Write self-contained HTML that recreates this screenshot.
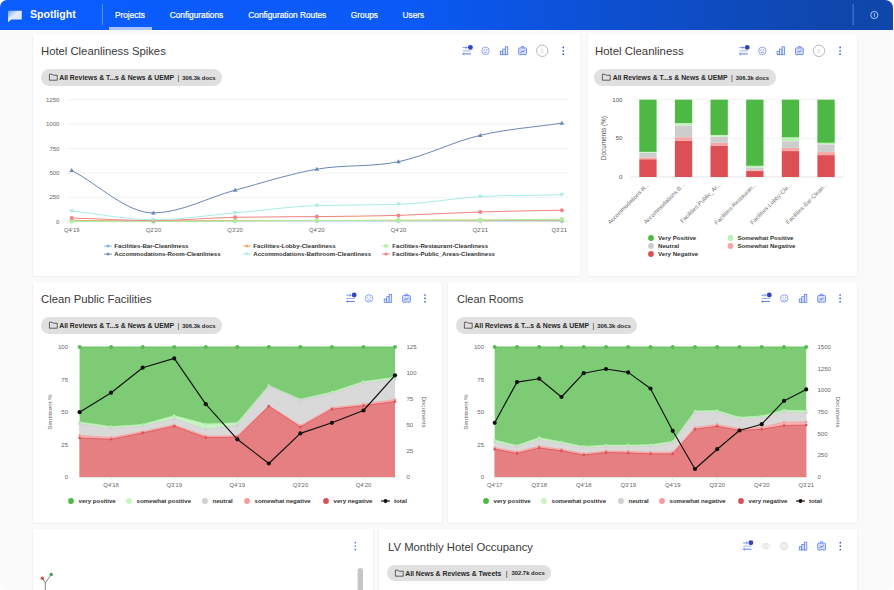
<!DOCTYPE html>
<html lang="en"><head><meta charset="utf-8"><title>Spotlight</title>
<style>
*{box-sizing:border-box;margin:0;padding:0}
html,body{width:894px;height:590px;overflow:hidden;background:#fff;font-family:"Liberation Sans",sans-serif;}
#app{position:absolute;left:0;top:0;width:892.8px;height:590px;background:#fafafa;border-radius:7px 8px 8px 8px;overflow:hidden}
#nav{position:absolute;left:0;top:0;width:894px;height:30px;background:linear-gradient(90deg,#0b5dff 0%,#0a5af6 45%,#0d50d2 68%,#0f47ae 92%,#0f46aa 100%)}
.nv{position:absolute;top:9.5px;color:#fff;font-size:8.3px;line-height:11px;white-space:nowrap;font-weight:400;-webkit-text-stroke:.22px #fff}
.card{position:absolute;background:#fff;box-shadow:0 1.2px 1.6px rgba(0,0,0,.085),0 0 1px rgba(0,0,0,.05)}
.title{position:absolute;color:#393939;font-size:11.4px;line-height:14px;white-space:nowrap;transform-origin:0 50%}
.pill{position:absolute;height:16.6px;border-radius:8.3px;background:#e0e0e0;color:#262626;font-weight:700;font-size:6.85px;line-height:17.8px;white-space:nowrap}
.pill span{position:absolute;top:.3px}
.pill .d{font-size:5.9px;top:.5px}
svg{position:absolute;left:0;top:0;overflow:visible}
text{font-family:"Liberation Sans",sans-serif}
</style></head><body><div id="app">

<div id="nav">
<svg width="894" height="30" viewBox="0 0 894 30">
<defs><linearGradient id="lg" x1="0" y1="0" x2="1" y2="1"><stop offset="0" stop-color="#6f9bff"/><stop offset=".42" stop-color="#eef3ff"/><stop offset="1" stop-color="#dbe6ff"/></linearGradient></defs>
<path d="M7.9,10.7 H21.8 V19.4 H11.3 L8.1,22.3 Z" fill="url(#lg)" opacity=".95"/>
<rect x="101.9" y="4" width="1" height="21" fill="#6f9dff" opacity=".8"/>
<rect x="109" y="27" width="43" height="3" fill="#a9c6ff"/>
<rect x="852.6" y="4" width="1.1" height="21" fill="#4f80e4" opacity=".95"/>
<circle cx="874.3" cy="15" r="3.6" fill="none" stroke="#bcd4ff" stroke-width=".9"/>
<rect x="873.9" y="13.2" width=".9" height="3.6" fill="#bcd4ff"/>
</svg>
<div style="position:absolute;left:29.5px;top:7px;color:#fff;font-size:11.2px;line-height:15px;font-weight:700;white-space:nowrap;transform-origin:0 50%;transform:scaleX(.943)" id="logo">Spotlight</div>
<div class="nv" style="left:114.9px">Projects</div>
<div class="nv" style="left:169.7px">Configurations</div>
<div class="nv" style="left:248.3px">Configuration Routes</div>
<div class="nv" style="left:350.8px">Groups</div>
<div class="nv" style="left:402.6px">Users</div>
</div>
<div class="card" style="left:33px;top:33.5px;width:547.2px;height:242px"></div>
<div class="card" style="left:587.6px;top:33.5px;width:269.8px;height:242px"></div>
<div class="card" style="left:33px;top:282.3px;width:409px;height:240.3px"></div>
<div class="card" style="left:448px;top:282.3px;width:409.4px;height:240.3px"></div>
<div class="card" style="left:33px;top:528.8px;width:340.3px;height:70px"></div>
<div class="card" style="left:379.2px;top:529.4px;width:478.2px;height:70px"></div>
<div class="title" style="left:41.3px;top:44.1px;transform:scaleX(0.9904)">Hotel Cleanliness Spikes</div>
<div class="title" style="left:595.0px;top:44.1px;transform:scaleX(0.9995)">Hotel Cleanliness</div>
<div class="title" style="left:41.3px;top:291.7px;transform:scaleX(0.9926)">Clean Public Facilities</div>
<div class="title" style="left:456.6px;top:291.7px;transform:scaleX(0.9635)">Clean Rooms</div>
<div class="title" style="left:387.5px;top:539.5px;transform:scaleX(0.9928)">LV Monthly Hotel Occupancy</div>
<div class="pill" style="left:40.8px;top:69.0px;width:181.6px"><svg width="20" height="17"><path d="M8.4,5.2 h2.6 l.9,1 h4.3 v5 h-7.8 z" fill="none" stroke="#333" stroke-width=".75"/></svg><span style="left:18.4px">All Reviews &amp; T...s &amp; News &amp; UEMP</span><span style="left:136.6px;font-weight:400">|</span><span class="d" style="left:141.4px">306.3k docs</span></div>
<div class="pill" style="left:594.3px;top:69.0px;width:181.6px"><svg width="20" height="17"><path d="M8.4,5.2 h2.6 l.9,1 h4.3 v5 h-7.8 z" fill="none" stroke="#333" stroke-width=".75"/></svg><span style="left:18.4px">All Reviews &amp; T...s &amp; News &amp; UEMP</span><span style="left:136.6px;font-weight:400">|</span><span class="d" style="left:141.4px">306.3k docs</span></div>
<div class="pill" style="left:40.8px;top:317.2px;width:181.6px"><svg width="20" height="17"><path d="M8.4,5.2 h2.6 l.9,1 h4.3 v5 h-7.8 z" fill="none" stroke="#333" stroke-width=".75"/></svg><span style="left:18.4px">All Reviews &amp; T...s &amp; News &amp; UEMP</span><span style="left:136.6px;font-weight:400">|</span><span class="d" style="left:141.4px">306.3k docs</span></div>
<div class="pill" style="left:455.9px;top:317.2px;width:181.6px"><svg width="20" height="17"><path d="M8.4,5.2 h2.6 l.9,1 h4.3 v5 h-7.8 z" fill="none" stroke="#333" stroke-width=".75"/></svg><span style="left:18.4px">All Reviews &amp; T...s &amp; News &amp; UEMP</span><span style="left:136.6px;font-weight:400">|</span><span class="d" style="left:141.4px">306.3k docs</span></div>
<div class="pill" style="left:386.8px;top:564.6px;width:164.4px"><svg width="20" height="17"><path d="M8.4,5.2 h2.6 l.9,1 h4.3 v5 h-7.8 z" fill="none" stroke="#333" stroke-width=".75"/></svg><span style="left:18.4px">All News &amp; Reviews &amp; Tweets</span><span style="left:119.0px;font-weight:400">|</span><span class="d" style="left:124.6px">302.7k docs</span></div>
<svg width="894" height="590" viewBox="0 0 894 590">
<g fill="none"><path d="M462.6,47.6 h5" stroke="#5a79e6" stroke-width=".8"/><path d="M465.6,46.4 l1.3,1.2 l-1.3,1.2" stroke="#5a79e6" stroke-width=".7"/><path d="M462.6,50.9 h8.4" stroke="#8aa4f2" stroke-width=".8"/><path d="M462.6,53.9 h8.4" stroke="#6685ea" stroke-width="1.1"/><path d="M464.2,52.7 l-1.3,1.2 l1.3,1.2" stroke="#5a79e6" stroke-width=".7"/></g><circle cx="470.4" cy="47.4" r="2.45" fill="#3346c0"/><g stroke="#6f8ff0" stroke-width=".75" fill="none"><circle cx="485.5" cy="50.8" r="3.75" fill="#f4f7ff"/><path d="M484.1,52.7 q1.4,-.9 2.8,0"/></g><circle cx="484.2" cy="49.9" r=".55" fill="#6f8ff0"/><circle cx="486.8" cy="49.9" r=".55" fill="#6f8ff0"/><g stroke="#5578e8" stroke-width=".75" fill="#e3ebff"><rect x="500.3" y="51.4" width="2.5" height="3.3"/><rect x="502.8" y="49.1" width="2.5" height="5.6"/><rect x="505.3" y="46.8" width="2.5" height="7.9"/></g><g stroke="#5578e8" stroke-width=".75" fill="#d3defd"><rect x="518.7" y="47.9" width="7.8" height="6.6" rx=".8"/><path d="M521.4,47.9 v-1.4 h2.4 v1.4" fill="none"/><path d="M520.2,54.5 v.9 M525.0,54.5 v.9" fill="none"/><path d="M520.3,52.7 l1.5,-1.5 l1.1,.7 l1.9,-1.9" fill="none" stroke="#2f46b8" stroke-width=".7"/></g><circle cx="542.2" cy="50.8" r="5.7" fill="#fff" stroke="#a3a3a3" stroke-width=".75"/><path d="M542.2,51.1 a1,1 0 1 1 .01,0 M540.6,52.8 q1.6,-1.6 3.2,0" fill="none" stroke="#d2d2d2" stroke-width=".6"/><circle cx="563.3" cy="47.4" r=".85" fill="#3a57c4"/><circle cx="563.3" cy="50.8" r=".85" fill="#3a57c4"/><circle cx="563.3" cy="54.2" r=".85" fill="#3a57c4"/>
<g fill="none"><path d="M739.4,47.6 h5" stroke="#5a79e6" stroke-width=".8"/><path d="M742.4,46.4 l1.3,1.2 l-1.3,1.2" stroke="#5a79e6" stroke-width=".7"/><path d="M739.4,50.9 h8.4" stroke="#8aa4f2" stroke-width=".8"/><path d="M739.4,53.9 h8.4" stroke="#6685ea" stroke-width="1.1"/><path d="M741.0,52.7 l-1.3,1.2 l1.3,1.2" stroke="#5a79e6" stroke-width=".7"/></g><circle cx="747.2" cy="47.4" r="2.45" fill="#3346c0"/><g stroke="#6f8ff0" stroke-width=".75" fill="none"><circle cx="762.3" cy="50.8" r="3.75" fill="#f4f7ff"/><path d="M760.9,52.7 q1.4,-.9 2.8,0"/></g><circle cx="761.0" cy="49.9" r=".55" fill="#6f8ff0"/><circle cx="763.6" cy="49.9" r=".55" fill="#6f8ff0"/><g stroke="#5578e8" stroke-width=".75" fill="#e3ebff"><rect x="777.1" y="51.4" width="2.5" height="3.3"/><rect x="779.6" y="49.1" width="2.5" height="5.6"/><rect x="782.1" y="46.8" width="2.5" height="7.9"/></g><g stroke="#5578e8" stroke-width=".75" fill="#d3defd"><rect x="795.5" y="47.9" width="7.8" height="6.6" rx=".8"/><path d="M798.2,47.9 v-1.4 h2.4 v1.4" fill="none"/><path d="M797.0,54.5 v.9 M801.8,54.5 v.9" fill="none"/><path d="M797.1,52.7 l1.5,-1.5 l1.1,.7 l1.9,-1.9" fill="none" stroke="#2f46b8" stroke-width=".7"/></g><circle cx="819.0" cy="50.8" r="5.7" fill="#fff" stroke="#a3a3a3" stroke-width=".75"/><path d="M819.0,51.1 a1,1 0 1 1 .01,0 M817.4,52.8 q1.6,-1.6 3.2,0" fill="none" stroke="#d2d2d2" stroke-width=".6"/><circle cx="840.1" cy="47.4" r=".85" fill="#3a57c4"/><circle cx="840.1" cy="50.8" r=".85" fill="#3a57c4"/><circle cx="840.1" cy="54.2" r=".85" fill="#3a57c4"/>
<g fill="none"><path d="M346.4,295.2 h5" stroke="#5a79e6" stroke-width=".8"/><path d="M349.4,294.0 l1.3,1.2 l-1.3,1.2" stroke="#5a79e6" stroke-width=".7"/><path d="M346.4,298.5 h8.4" stroke="#8aa4f2" stroke-width=".8"/><path d="M346.4,301.5 h8.4" stroke="#6685ea" stroke-width="1.1"/><path d="M348.0,300.3 l-1.3,1.2 l1.3,1.2" stroke="#5a79e6" stroke-width=".7"/></g><circle cx="354.2" cy="295.0" r="2.45" fill="#3346c0"/><g stroke="#6f8ff0" stroke-width=".75" fill="none"><circle cx="369.1" cy="298.4" r="3.75" fill="#f4f7ff"/><path d="M367.7,300.3 q1.4,-.9 2.8,0"/></g><circle cx="367.8" cy="297.5" r=".55" fill="#6f8ff0"/><circle cx="370.4" cy="297.5" r=".55" fill="#6f8ff0"/><g stroke="#5578e8" stroke-width=".75" fill="#e3ebff"><rect x="384.2" y="299.0" width="2.5" height="3.3"/><rect x="386.7" y="296.7" width="2.5" height="5.6"/><rect x="389.2" y="294.4" width="2.5" height="7.9"/></g><g stroke="#5578e8" stroke-width=".75" fill="#d3defd"><rect x="402.6" y="295.5" width="7.8" height="6.6" rx=".8"/><path d="M405.3,295.5 v-1.4 h2.4 v1.4" fill="none"/><path d="M404.1,302.1 v.9 M408.9,302.1 v.9" fill="none"/><path d="M404.2,300.3 l1.5,-1.5 l1.1,.7 l1.9,-1.9" fill="none" stroke="#2f46b8" stroke-width=".7"/></g><circle cx="425.0" cy="295.0" r=".85" fill="#3a57c4"/><circle cx="425.0" cy="298.4" r=".85" fill="#3a57c4"/><circle cx="425.0" cy="301.8" r=".85" fill="#3a57c4"/>
<g fill="none"><path d="M761.5,295.2 h5" stroke="#5a79e6" stroke-width=".8"/><path d="M764.5,294.0 l1.3,1.2 l-1.3,1.2" stroke="#5a79e6" stroke-width=".7"/><path d="M761.5,298.5 h8.4" stroke="#8aa4f2" stroke-width=".8"/><path d="M761.5,301.5 h8.4" stroke="#6685ea" stroke-width="1.1"/><path d="M763.1,300.3 l-1.3,1.2 l1.3,1.2" stroke="#5a79e6" stroke-width=".7"/></g><circle cx="769.3" cy="295.0" r="2.45" fill="#3346c0"/><g stroke="#6f8ff0" stroke-width=".75" fill="none"><circle cx="784.2" cy="298.4" r="3.75" fill="#f4f7ff"/><path d="M782.8,300.3 q1.4,-.9 2.8,0"/></g><circle cx="782.9" cy="297.5" r=".55" fill="#6f8ff0"/><circle cx="785.5" cy="297.5" r=".55" fill="#6f8ff0"/><g stroke="#5578e8" stroke-width=".75" fill="#e3ebff"><rect x="799.3" y="299.0" width="2.5" height="3.3"/><rect x="801.8" y="296.7" width="2.5" height="5.6"/><rect x="804.3" y="294.4" width="2.5" height="7.9"/></g><g stroke="#5578e8" stroke-width=".75" fill="#d3defd"><rect x="817.7" y="295.5" width="7.8" height="6.6" rx=".8"/><path d="M820.4,295.5 v-1.4 h2.4 v1.4" fill="none"/><path d="M819.2,302.1 v.9 M824.0,302.1 v.9" fill="none"/><path d="M819.3,300.3 l1.5,-1.5 l1.1,.7 l1.9,-1.9" fill="none" stroke="#2f46b8" stroke-width=".7"/></g><circle cx="840.1" cy="295.0" r=".85" fill="#3a57c4"/><circle cx="840.1" cy="298.4" r=".85" fill="#3a57c4"/><circle cx="840.1" cy="301.8" r=".85" fill="#3a57c4"/>
<circle cx="355.3" cy="542.6" r=".85" fill="#4a7fe8"/><circle cx="355.3" cy="546.0" r=".85" fill="#4a7fe8"/><circle cx="355.3" cy="549.4" r=".85" fill="#4a7fe8"/>
<g fill="none"><path d="M743.1,542.9 h5" stroke="#5a79e6" stroke-width=".8"/><path d="M746.1,541.7 l1.3,1.2 l-1.3,1.2" stroke="#5a79e6" stroke-width=".7"/><path d="M743.1,546.2 h8.4" stroke="#8aa4f2" stroke-width=".8"/><path d="M743.1,549.2 h8.4" stroke="#6685ea" stroke-width="1.1"/><path d="M744.7,548.0 l-1.3,1.2 l1.3,1.2" stroke="#5a79e6" stroke-width=".7"/></g><circle cx="750.9" cy="542.7" r="2.45" fill="#3346c0"/><g stroke="#d6d6d6" stroke-width=".8" fill="none"><path d="M761.4,546.1 q4.5,-5.2 9,0 q-4.5,5.2 -9,0z"/><circle cx="765.9" cy="546.1" r="1.5"/></g><g stroke="#d4d4d4" stroke-width=".75" fill="none"><circle cx="784.0" cy="546.1" r="3.75" fill="#f6f6f6"/><path d="M782.5,547.6 h3"/></g><circle cx="782.7" cy="545.2" r=".55" fill="#d4d4d4"/><circle cx="785.3" cy="545.2" r=".55" fill="#d4d4d4"/><g stroke="#5578e8" stroke-width=".75" fill="#e3ebff"><rect x="799.3" y="546.7" width="2.5" height="3.3"/><rect x="801.8" y="544.4" width="2.5" height="5.6"/><rect x="804.3" y="542.1" width="2.5" height="7.9"/></g><g stroke="#5578e8" stroke-width=".75" fill="#d3defd"><rect x="817.7" y="543.2" width="7.8" height="6.6" rx=".8"/><path d="M820.4,543.2 v-1.4 h2.4 v1.4" fill="none"/><path d="M819.2,549.8 v.9 M824.0,549.8 v.9" fill="none"/><path d="M819.3,548.0 l1.5,-1.5 l1.1,.7 l1.9,-1.9" fill="none" stroke="#2f46b8" stroke-width=".7"/></g><circle cx="840.3" cy="542.7" r=".85" fill="#3a57c4"/><circle cx="840.3" cy="546.1" r=".85" fill="#3a57c4"/><circle cx="840.3" cy="549.5" r=".85" fill="#3a57c4"/>
<rect x="67" y="221.3" width="501" height=".8" fill="#e4e4e4"/>
<text x="59.4" y="223.7" font-size="6" fill="#666" text-anchor="end">0</text>
<rect x="67" y="196.9" width="501" height=".8" fill="#efefef"/>
<text x="59.4" y="199.3" font-size="6" fill="#666" text-anchor="end">250</text>
<rect x="67" y="172.5" width="501" height=".8" fill="#efefef"/>
<text x="59.4" y="174.9" font-size="6" fill="#666" text-anchor="end">500</text>
<rect x="67" y="148.1" width="501" height=".8" fill="#efefef"/>
<text x="59.4" y="150.5" font-size="6" fill="#666" text-anchor="end">750</text>
<rect x="67" y="123.7" width="501" height=".8" fill="#efefef"/>
<text x="59.4" y="126.1" font-size="6" fill="#666" text-anchor="end">1000</text>
<rect x="67" y="99.3" width="501" height=".8" fill="#efefef"/>
<text x="59.4" y="101.7" font-size="6" fill="#666" text-anchor="end">1250</text>
<rect x="71.4" y="222.2" width=".6" height="2.6" fill="#e0e0e0"/>
<text x="71.7" y="232.2" font-size="5.9" fill="#666" text-anchor="middle">Q4'19</text>
<rect x="153.1" y="222.2" width=".6" height="2.6" fill="#e0e0e0"/>
<text x="153.4" y="232.2" font-size="5.9" fill="#666" text-anchor="middle">Q2'20</text>
<rect x="234.8" y="222.2" width=".6" height="2.6" fill="#e0e0e0"/>
<text x="235.1" y="232.2" font-size="5.9" fill="#666" text-anchor="middle">Q3'20</text>
<rect x="316.5" y="222.2" width=".6" height="2.6" fill="#e0e0e0"/>
<text x="316.8" y="232.2" font-size="5.9" fill="#666" text-anchor="middle">Q4'20</text>
<rect x="398.2" y="222.2" width=".6" height="2.6" fill="#e0e0e0"/>
<text x="398.5" y="232.2" font-size="5.9" fill="#666" text-anchor="middle">Q4'20</text>
<rect x="479.9" y="222.2" width=".6" height="2.6" fill="#e0e0e0"/>
<text x="480.2" y="232.2" font-size="5.9" fill="#666" text-anchor="middle">Q2'21</text>
<rect x="561.6" y="222.2" width=".6" height="2.6" fill="#e0e0e0"/>
<text x="559.3" y="232.2" font-size="5.9" fill="#666" text-anchor="middle">Q3'21</text>
<path d="M71.70,220.92 C98.93,221.05 126.17,221.31 153.40,221.31 C180.63,221.31 207.87,220.72 235.10,220.72 C262.33,220.72 289.57,220.72 316.80,220.72 C344.03,220.72 371.27,220.72 398.50,220.72 C425.73,220.72 452.97,220.72 480.20,220.72 C507.43,220.72 534.67,220.72 561.90,220.72" fill="none" stroke="#7cb5ec" stroke-width="1"/>
<circle cx="71.7" cy="220.9" r="2" fill="#7cb5ec"/>
<circle cx="153.4" cy="221.3" r="2" fill="#7cb5ec"/>
<circle cx="235.1" cy="220.7" r="2" fill="#7cb5ec"/>
<circle cx="316.8" cy="220.7" r="2" fill="#7cb5ec"/>
<circle cx="398.5" cy="220.7" r="2" fill="#7cb5ec"/>
<circle cx="480.2" cy="220.7" r="2" fill="#7cb5ec"/>
<circle cx="561.9" cy="220.7" r="2" fill="#7cb5ec"/>
<path d="M71.70,220.33 C98.93,220.59 126.17,221.11 153.40,221.11 C180.63,221.11 207.87,220.53 235.10,220.53 C262.33,220.53 289.57,220.53 316.80,220.53 C344.03,220.53 371.27,220.40 398.50,220.33 C425.73,220.27 452.97,220.20 480.20,220.14 C507.43,220.07 534.67,220.01 561.90,219.94" fill="none" stroke="#f7a35c" stroke-width="1"/>
<path d="M71.7,218.0 l2.3,2.3 l-2.3,2.3 l-2.3,-2.3z" fill="#f7a35c"/>
<path d="M153.4,218.8 l2.3,2.3 l-2.3,2.3 l-2.3,-2.3z" fill="#f7a35c"/>
<path d="M235.1,218.2 l2.3,2.3 l-2.3,2.3 l-2.3,-2.3z" fill="#f7a35c"/>
<path d="M316.8,218.2 l2.3,2.3 l-2.3,2.3 l-2.3,-2.3z" fill="#f7a35c"/>
<path d="M398.5,218.0 l2.3,2.3 l-2.3,2.3 l-2.3,-2.3z" fill="#f7a35c"/>
<path d="M480.2,217.8 l2.3,2.3 l-2.3,2.3 l-2.3,-2.3z" fill="#f7a35c"/>
<path d="M561.9,217.6 l2.3,2.3 l-2.3,2.3 l-2.3,-2.3z" fill="#f7a35c"/>
<path d="M71.70,221.21 C98.93,221.28 126.17,221.41 153.40,221.41 C180.63,221.41 207.87,221.07 235.10,220.92 C262.33,220.77 289.57,220.63 316.80,220.53 C344.03,220.43 371.27,220.43 398.50,220.33 C425.73,220.24 452.97,220.12 480.20,219.94 C507.43,219.76 534.67,219.49 561.90,219.26" fill="none" stroke="#adf19f" stroke-width="1"/>
<rect x="69.7" y="219.2" width="4" height="4" fill="#adf19f"/>
<rect x="151.4" y="219.4" width="4" height="4" fill="#adf19f"/>
<rect x="233.1" y="218.9" width="4" height="4" fill="#adf19f"/>
<rect x="314.8" y="218.5" width="4" height="4" fill="#adf19f"/>
<rect x="396.5" y="218.3" width="4" height="4" fill="#adf19f"/>
<rect x="478.2" y="217.9" width="4" height="4" fill="#adf19f"/>
<rect x="559.9" y="217.3" width="4" height="4" fill="#adf19f"/>
<path d="M71.70,217.99 C98.93,218.84 126.17,220.53 153.40,220.53 C180.63,220.53 207.87,217.92 235.10,217.31 C262.33,216.70 289.57,216.93 316.80,216.62 C344.03,216.32 371.27,216.14 398.50,215.36 C425.73,214.58 452.97,212.80 480.20,211.94 C507.43,211.08 534.67,210.77 561.90,210.18" fill="none" stroke="#f28383" stroke-width="1"/>
<circle cx="71.7" cy="218.0" r="2" fill="#f28383"/>
<circle cx="153.4" cy="220.5" r="2" fill="#f28383"/>
<circle cx="235.1" cy="217.3" r="2" fill="#f28383"/>
<circle cx="316.8" cy="216.6" r="2" fill="#f28383"/>
<circle cx="398.5" cy="215.4" r="2" fill="#f28383"/>
<circle cx="480.2" cy="211.9" r="2" fill="#f28383"/>
<circle cx="561.9" cy="210.2" r="2" fill="#f28383"/>
<path d="M71.70,210.96 C98.93,213.89 126.17,219.75 153.40,219.75 C180.63,219.75 207.87,215.27 235.10,212.92 C262.33,210.56 289.57,206.40 316.80,205.60 C344.03,204.79 371.27,205.28 398.50,204.42 C425.73,203.57 452.97,198.21 480.20,196.62 C507.43,195.02 534.67,195.45 561.90,194.86" fill="none" stroke="#a6ece7" stroke-width="1"/>
<path d="M71.7,213.2 l2.3,-4 h-4.6z" fill="#a6ece7"/>
<path d="M153.4,221.9 l2.3,-4 h-4.6z" fill="#a6ece7"/>
<path d="M235.1,215.1 l2.3,-4 h-4.6z" fill="#a6ece7"/>
<path d="M316.8,207.8 l2.3,-4 h-4.6z" fill="#a6ece7"/>
<path d="M398.5,206.6 l2.3,-4 h-4.6z" fill="#a6ece7"/>
<path d="M480.2,198.8 l2.3,-4 h-4.6z" fill="#a6ece7"/>
<path d="M561.9,197.1 l2.3,-4 h-4.6z" fill="#a6ece7"/>
<path d="M71.70,170.46 C98.93,184.61 126.17,212.92 153.40,212.92 C180.63,212.92 207.87,197.46 235.10,190.18 C262.33,182.89 289.57,173.94 316.80,169.19 C344.03,164.44 371.27,167.32 398.50,161.68 C425.73,156.03 452.97,141.75 480.20,135.32 C507.43,128.90 534.67,127.19 561.90,123.12" fill="none" stroke="#6a86b8" stroke-width="1"/>
<path d="M71.7,168.1 l2.3,4 h-4.6z" fill="#6a86b8"/>
<path d="M153.4,210.5 l2.3,4 h-4.6z" fill="#6a86b8"/>
<path d="M235.1,187.8 l2.3,4 h-4.6z" fill="#6a86b8"/>
<path d="M316.8,166.8 l2.3,4 h-4.6z" fill="#6a86b8"/>
<path d="M398.5,159.3 l2.3,4 h-4.6z" fill="#6a86b8"/>
<path d="M480.2,132.9 l2.3,4 h-4.6z" fill="#6a86b8"/>
<path d="M561.9,120.7 l2.3,4 h-4.6z" fill="#6a86b8"/>
<rect x="104.0" y="245.6" width="8" height=".9" fill="#7cb5ec"/>
<circle cx="108.0" cy="246.0" r="1.6" fill="#7cb5ec"/>
<text x="114.3" y="248.1" font-size="6.1" font-weight="700" fill="#333">Facilities-Bar-Cleanliness</text>
<rect x="104.0" y="253.6" width="8" height=".9" fill="#6a86b8"/>
<path d="M108.0,252.1 l1.8,3.2 h-3.6z" fill="#6a86b8"/>
<text x="114.3" y="256.1" font-size="6.1" font-weight="700" fill="#333">Accommodations-Room-Cleanliness</text>
<rect x="243.0" y="245.6" width="8" height=".9" fill="#f7a35c"/>
<path d="M247.0,244.2 l1.8,1.8 l-1.8,1.8 l-1.8,-1.8z" fill="#f7a35c"/>
<text x="253.3" y="248.1" font-size="6.1" font-weight="700" fill="#333">Facilities-Lobby-Cleanliness</text>
<rect x="243.0" y="253.6" width="8" height=".9" fill="#a6ece7"/>
<path d="M247.0,255.8 l1.8,-3.2 h-3.6z" fill="#a6ece7"/>
<text x="253.3" y="256.1" font-size="6.1" font-weight="700" fill="#333">Accommodations-Bathroom-Cleanliness</text>
<rect x="382.0" y="245.6" width="8" height=".9" fill="#adf19f"/>
<rect x="384.4" y="244.4" width="3.2" height="3.2" fill="#adf19f"/>
<text x="392.3" y="248.1" font-size="6.1" font-weight="700" fill="#333">Facilities-Restaurant-Cleanliness</text>
<rect x="382.0" y="253.6" width="8" height=".9" fill="#f28383"/>
<circle cx="386.0" cy="254.0" r="1.6" fill="#f28383"/>
<text x="392.3" y="256.1" font-size="6.1" font-weight="700" fill="#333">Facilities-Public_Areas-Cleanliness</text>
<rect x="631" y="176.6" width="213" height=".8" fill="#dcdcdc"/>
<text x="622.5" y="179.0" font-size="6.1" fill="#555" text-anchor="end">0</text>
<rect x="631" y="137.9" width="213" height=".8" fill="#efefef"/>
<text x="622.5" y="140.3" font-size="6.1" fill="#555" text-anchor="end">50</text>
<rect x="631" y="99.3" width="213" height=".8" fill="#efefef"/>
<text x="622.5" y="101.7" font-size="6.1" fill="#555" text-anchor="end">100</text>
<text transform="translate(606.3,138.2) rotate(-90)" font-size="6.4" fill="#555" text-anchor="middle">Documents (%)</text>
<rect x="639.3" y="159.07" width="17.3" height="17.93" fill="#db4f55"/>
<rect x="639.3" y="158.85" width="17.3" height=".45" fill="#fff" opacity=".8"/>
<rect x="639.3" y="157.37" width="17.3" height="1.70" fill="#f6a5a5"/>
<rect x="639.3" y="157.15" width="17.3" height=".45" fill="#fff" opacity=".8"/>
<rect x="639.3" y="152.65" width="17.3" height="4.72" fill="#cdcdcd"/>
<rect x="639.3" y="152.43" width="17.3" height=".45" fill="#fff" opacity=".8"/>
<rect x="639.3" y="151.88" width="17.3" height="0.77" fill="#b9f3b3"/>
<rect x="639.3" y="151.66" width="17.3" height=".45" fill="#fff" opacity=".8"/>
<rect x="639.3" y="99.70" width="17.3" height="52.18" fill="#4db843"/>
<text transform="translate(649.7,185.0) rotate(-45)" font-size="5.85" fill="#777" text-anchor="end">Accommodations-R...</text>
<rect x="674.9" y="140.36" width="17.3" height="36.64" fill="#db4f55"/>
<rect x="674.9" y="140.14" width="17.3" height=".45" fill="#fff" opacity=".8"/>
<rect x="674.9" y="137.04" width="17.3" height="3.32" fill="#f6a5a5"/>
<rect x="674.9" y="136.82" width="17.3" height=".45" fill="#fff" opacity=".8"/>
<rect x="674.9" y="125.21" width="17.3" height="11.83" fill="#cdcdcd"/>
<rect x="674.9" y="124.99" width="17.3" height=".45" fill="#fff" opacity=".8"/>
<rect x="674.9" y="123.12" width="17.3" height="2.09" fill="#b9f3b3"/>
<rect x="674.9" y="122.90" width="17.3" height=".45" fill="#fff" opacity=".8"/>
<rect x="674.9" y="99.70" width="17.3" height="23.42" fill="#4db843"/>
<text transform="translate(685.3,185.0) rotate(-45)" font-size="5.85" fill="#777" text-anchor="end">Accommodations-B...</text>
<rect x="710.5" y="145.31" width="17.3" height="31.69" fill="#db4f55"/>
<rect x="710.5" y="145.09" width="17.3" height=".45" fill="#fff" opacity=".8"/>
<rect x="710.5" y="142.76" width="17.3" height="2.55" fill="#f6a5a5"/>
<rect x="710.5" y="142.54" width="17.3" height=".45" fill="#fff" opacity=".8"/>
<rect x="710.5" y="136.34" width="17.3" height="6.42" fill="#cdcdcd"/>
<rect x="710.5" y="136.12" width="17.3" height=".45" fill="#fff" opacity=".8"/>
<rect x="710.5" y="134.95" width="17.3" height="1.39" fill="#b9f3b3"/>
<rect x="710.5" y="134.73" width="17.3" height=".45" fill="#fff" opacity=".8"/>
<rect x="710.5" y="99.70" width="17.3" height="35.25" fill="#4db843"/>
<text transform="translate(720.9,185.0) rotate(-45)" font-size="5.85" fill="#777" text-anchor="end">Facilities-Public_Ar...</text>
<rect x="746.2" y="170.89" width="17.3" height="6.11" fill="#db4f55"/>
<rect x="746.2" y="170.67" width="17.3" height=".45" fill="#fff" opacity=".8"/>
<rect x="746.2" y="169.89" width="17.3" height="1.00" fill="#f6a5a5"/>
<rect x="746.2" y="169.67" width="17.3" height=".45" fill="#fff" opacity=".8"/>
<rect x="746.2" y="167.18" width="17.3" height="2.71" fill="#cdcdcd"/>
<rect x="746.2" y="166.96" width="17.3" height=".45" fill="#fff" opacity=".8"/>
<rect x="746.2" y="165.79" width="17.3" height="1.39" fill="#b9f3b3"/>
<rect x="746.2" y="165.57" width="17.3" height=".45" fill="#fff" opacity=".8"/>
<rect x="746.2" y="99.70" width="17.3" height="66.09" fill="#4db843"/>
<text transform="translate(756.6,185.0) rotate(-45)" font-size="5.85" fill="#777" text-anchor="end">Facilities-Restauran...</text>
<rect x="781.8" y="150.87" width="17.3" height="26.13" fill="#db4f55"/>
<rect x="781.8" y="150.65" width="17.3" height=".45" fill="#fff" opacity=".8"/>
<rect x="781.8" y="147.86" width="17.3" height="3.01" fill="#f6a5a5"/>
<rect x="781.8" y="147.64" width="17.3" height=".45" fill="#fff" opacity=".8"/>
<rect x="781.8" y="141.06" width="17.3" height="6.80" fill="#cdcdcd"/>
<rect x="781.8" y="140.84" width="17.3" height=".45" fill="#fff" opacity=".8"/>
<rect x="781.8" y="137.35" width="17.3" height="3.71" fill="#b9f3b3"/>
<rect x="781.8" y="137.13" width="17.3" height=".45" fill="#fff" opacity=".8"/>
<rect x="781.8" y="99.70" width="17.3" height="37.65" fill="#4db843"/>
<text transform="translate(792.2,185.0) rotate(-45)" font-size="5.85" fill="#777" text-anchor="end">Facilities-Lobby-Cle...</text>
<rect x="817.4" y="154.97" width="17.3" height="22.03" fill="#db4f55"/>
<rect x="817.4" y="154.75" width="17.3" height=".45" fill="#fff" opacity=".8"/>
<rect x="817.4" y="151.88" width="17.3" height="3.09" fill="#f6a5a5"/>
<rect x="817.4" y="151.66" width="17.3" height=".45" fill="#fff" opacity=".8"/>
<rect x="817.4" y="144.15" width="17.3" height="7.73" fill="#cdcdcd"/>
<rect x="817.4" y="143.93" width="17.3" height=".45" fill="#fff" opacity=".8"/>
<rect x="817.4" y="142.76" width="17.3" height="1.39" fill="#b9f3b3"/>
<rect x="817.4" y="142.54" width="17.3" height=".45" fill="#fff" opacity=".8"/>
<rect x="817.4" y="99.70" width="17.3" height="43.06" fill="#4db843"/>
<text transform="translate(827.8,185.0) rotate(-45)" font-size="5.85" fill="#777" text-anchor="end">Facilities-Bar-Clean...</text>
<circle cx="651.0" cy="238.0" r="2.9" fill="#4db843"/>
<text x="658.0" y="240.2" font-size="6.15" font-weight="700" fill="#333">Very Positive</text>
<circle cx="651.0" cy="246.0" r="2.9" fill="#cdcdcd"/>
<text x="658.0" y="248.2" font-size="6.15" font-weight="700" fill="#333">Neutral</text>
<circle cx="651.0" cy="254.0" r="2.9" fill="#db4f55"/>
<text x="658.0" y="256.2" font-size="6.15" font-weight="700" fill="#333">Very Negative</text>
<circle cx="730.5" cy="238.0" r="2.9" fill="#b9f3b3"/>
<text x="737.5" y="240.2" font-size="6.15" font-weight="700" fill="#333">Somewhat Positive</text>
<circle cx="730.5" cy="246.0" r="2.9" fill="#f6a5a5"/>
<text x="737.5" y="248.2" font-size="6.15" font-weight="700" fill="#333">Somewhat Negative</text>
<rect x="79.60" y="347.00" width="315.40" height="130.00" fill="#7dcb74"/>
<polygon points="79.60,422.00 111.14,426.60 142.68,424.50 174.22,415.60 205.76,424.00 237.30,422.80 268.84,385.50 300.38,399.30 331.92,392.00 363.46,381.50 395.00,377.20 395.00,477.00 79.60,477.00" fill="#c6f5c1"/>
<polygon points="79.60,424.00 111.14,428.30 142.68,426.20 174.22,418.60 205.76,429.20 237.30,425.30 268.84,386.00 300.38,400.00 331.92,393.60 363.46,383.00 395.00,379.20 395.00,477.00 79.60,477.00" fill="#d9d9d9"/>
<polygon points="79.60,435.50 111.14,437.50 142.68,431.50 174.22,424.80 205.76,436.00 237.30,435.80 268.84,405.50 300.38,425.50 331.92,407.80 363.46,404.30 395.00,399.50 395.00,477.00 79.60,477.00" fill="#f7b3b3"/>
<polygon points="79.60,438.00 111.14,439.30 142.68,433.00 174.22,426.20 205.76,437.60 237.30,437.20 268.84,406.30 300.38,427.00 331.92,409.20 363.46,405.80 395.00,401.60 395.00,477.00 79.60,477.00" fill="#e57f82"/>
<polyline points="79.60,422.00 111.14,426.60 142.68,424.50 174.22,415.60 205.76,424.00 237.30,422.80 268.84,385.50 300.38,399.30 331.92,392.00 363.46,381.50 395.00,377.20" fill="none" stroke="#b4efae" stroke-width=".8"/>
<circle cx="79.6" cy="422.0" r="1.3" fill="#b4efae"/>
<circle cx="111.1" cy="426.6" r="1.3" fill="#b4efae"/>
<circle cx="142.7" cy="424.5" r="1.3" fill="#b4efae"/>
<circle cx="174.2" cy="415.6" r="1.3" fill="#b4efae"/>
<circle cx="205.8" cy="424.0" r="1.3" fill="#b4efae"/>
<circle cx="237.3" cy="422.8" r="1.3" fill="#b4efae"/>
<circle cx="268.8" cy="385.5" r="1.3" fill="#b4efae"/>
<circle cx="300.4" cy="399.3" r="1.3" fill="#b4efae"/>
<circle cx="331.9" cy="392.0" r="1.3" fill="#b4efae"/>
<circle cx="363.5" cy="381.5" r="1.3" fill="#b4efae"/>
<circle cx="395.0" cy="377.2" r="1.3" fill="#b4efae"/>
<polyline points="79.60,424.00 111.14,428.30 142.68,426.20 174.22,418.60 205.76,429.20 237.30,425.30 268.84,386.00 300.38,400.00 331.92,393.60 363.46,383.00 395.00,379.20" fill="none" stroke="#d0d0d0" stroke-width=".8"/>
<circle cx="79.6" cy="424.0" r="1.3" fill="#d0d0d0"/>
<circle cx="111.1" cy="428.3" r="1.3" fill="#d0d0d0"/>
<circle cx="142.7" cy="426.2" r="1.3" fill="#d0d0d0"/>
<circle cx="174.2" cy="418.6" r="1.3" fill="#d0d0d0"/>
<circle cx="205.8" cy="429.2" r="1.3" fill="#d0d0d0"/>
<circle cx="237.3" cy="425.3" r="1.3" fill="#d0d0d0"/>
<circle cx="268.8" cy="386.0" r="1.3" fill="#d0d0d0"/>
<circle cx="300.4" cy="400.0" r="1.3" fill="#d0d0d0"/>
<circle cx="331.9" cy="393.6" r="1.3" fill="#d0d0d0"/>
<circle cx="363.5" cy="383.0" r="1.3" fill="#d0d0d0"/>
<circle cx="395.0" cy="379.2" r="1.3" fill="#d0d0d0"/>
<polyline points="79.60,435.50 111.14,437.50 142.68,431.50 174.22,424.80 205.76,436.00 237.30,435.80 268.84,405.50 300.38,425.50 331.92,407.80 363.46,404.30 395.00,399.50" fill="none" stroke="#f59d9d" stroke-width=".8"/>
<circle cx="79.6" cy="435.5" r="1.3" fill="#f59d9d"/>
<circle cx="111.1" cy="437.5" r="1.3" fill="#f59d9d"/>
<circle cx="142.7" cy="431.5" r="1.3" fill="#f59d9d"/>
<circle cx="174.2" cy="424.8" r="1.3" fill="#f59d9d"/>
<circle cx="205.8" cy="436.0" r="1.3" fill="#f59d9d"/>
<circle cx="237.3" cy="435.8" r="1.3" fill="#f59d9d"/>
<circle cx="268.8" cy="405.5" r="1.3" fill="#f59d9d"/>
<circle cx="300.4" cy="425.5" r="1.3" fill="#f59d9d"/>
<circle cx="331.9" cy="407.8" r="1.3" fill="#f59d9d"/>
<circle cx="363.5" cy="404.3" r="1.3" fill="#f59d9d"/>
<circle cx="395.0" cy="399.5" r="1.3" fill="#f59d9d"/>
<polyline points="79.60,438.00 111.14,439.30 142.68,433.00 174.22,426.20 205.76,437.60 237.30,437.20 268.84,406.30 300.38,427.00 331.92,409.20 363.46,405.80 395.00,401.60" fill="none" stroke="#dc5055" stroke-width=".8"/>
<circle cx="79.6" cy="438.0" r="1.3" fill="#dc5055"/>
<circle cx="111.1" cy="439.3" r="1.3" fill="#dc5055"/>
<circle cx="142.7" cy="433.0" r="1.3" fill="#dc5055"/>
<circle cx="174.2" cy="426.2" r="1.3" fill="#dc5055"/>
<circle cx="205.8" cy="437.6" r="1.3" fill="#dc5055"/>
<circle cx="237.3" cy="437.2" r="1.3" fill="#dc5055"/>
<circle cx="268.8" cy="406.3" r="1.3" fill="#dc5055"/>
<circle cx="300.4" cy="427.0" r="1.3" fill="#dc5055"/>
<circle cx="331.9" cy="409.2" r="1.3" fill="#dc5055"/>
<circle cx="363.5" cy="405.8" r="1.3" fill="#dc5055"/>
<circle cx="395.0" cy="401.6" r="1.3" fill="#dc5055"/>
<polyline points="79.60,347.00 111.14,347.00 142.68,347.00 174.22,347.00 205.76,347.00 237.30,347.00 268.84,347.00 300.38,347.00 331.92,347.00 363.46,347.00 395.00,347.00" fill="none" stroke="#62c15a" stroke-width=".9"/>
<circle cx="79.6" cy="347.0" r="1.95" fill="#58ba50"/>
<circle cx="111.1" cy="347.0" r="1.95" fill="#58ba50"/>
<circle cx="142.7" cy="347.0" r="1.95" fill="#58ba50"/>
<circle cx="174.2" cy="347.0" r="1.95" fill="#58ba50"/>
<circle cx="205.8" cy="347.0" r="1.95" fill="#58ba50"/>
<circle cx="237.3" cy="347.0" r="1.95" fill="#58ba50"/>
<circle cx="268.8" cy="347.0" r="1.95" fill="#58ba50"/>
<circle cx="300.4" cy="347.0" r="1.95" fill="#58ba50"/>
<circle cx="331.9" cy="347.0" r="1.95" fill="#58ba50"/>
<circle cx="363.5" cy="347.0" r="1.95" fill="#58ba50"/>
<circle cx="395.0" cy="347.0" r="1.95" fill="#58ba50"/>
<rect x="79.6" y="477.0" width="315.4" height=".7" fill="#d8d8d8"/>
<polyline points="79.60,412.20 111.14,392.70 142.68,367.70 174.22,358.40 205.76,404.20 237.30,439.30 268.84,463.50 300.38,433.40 331.92,422.80 363.46,410.50 395.00,375.30" fill="none" stroke="#111" stroke-width="1.15" stroke-linejoin="round"/>
<circle cx="79.6" cy="412.2" r="2.1" fill="#111"/>
<circle cx="111.1" cy="392.7" r="2.1" fill="#111"/>
<circle cx="142.7" cy="367.7" r="2.1" fill="#111"/>
<circle cx="174.2" cy="358.4" r="2.1" fill="#111"/>
<circle cx="205.8" cy="404.2" r="2.1" fill="#111"/>
<circle cx="237.3" cy="439.3" r="2.1" fill="#111"/>
<circle cx="268.8" cy="463.5" r="2.1" fill="#111"/>
<circle cx="300.4" cy="433.4" r="2.1" fill="#111"/>
<circle cx="331.9" cy="422.8" r="2.1" fill="#111"/>
<circle cx="363.5" cy="410.5" r="2.1" fill="#111"/>
<circle cx="395.0" cy="375.3" r="2.1" fill="#111"/>
<rect x="110.8" y="477.6" width=".6" height="2.6" fill="#dcdcdc"/>
<text x="111.1" y="487.2" font-size="5.9" fill="#666" text-anchor="middle">Q4'18</text>
<rect x="173.9" y="477.6" width=".6" height="2.6" fill="#dcdcdc"/>
<text x="174.2" y="487.2" font-size="5.9" fill="#666" text-anchor="middle">Q3'19</text>
<rect x="237.0" y="477.6" width=".6" height="2.6" fill="#dcdcdc"/>
<text x="237.3" y="487.2" font-size="5.9" fill="#666" text-anchor="middle">Q4'19</text>
<rect x="300.1" y="477.6" width=".6" height="2.6" fill="#dcdcdc"/>
<text x="300.4" y="487.2" font-size="5.9" fill="#666" text-anchor="middle">Q3'20</text>
<rect x="363.2" y="477.6" width=".6" height="2.6" fill="#dcdcdc"/>
<text x="363.5" y="487.2" font-size="5.9" fill="#666" text-anchor="middle">Q4'20</text>
<text x="68.0" y="479.1" font-size="6.05" fill="#666" text-anchor="end">0</text>
<text x="68.0" y="446.6" font-size="6.05" fill="#666" text-anchor="end">25</text>
<text x="68.0" y="414.1" font-size="6.05" fill="#666" text-anchor="end">50</text>
<text x="68.0" y="381.6" font-size="6.05" fill="#666" text-anchor="end">75</text>
<text x="68.0" y="349.1" font-size="6.05" fill="#666" text-anchor="end">100</text>
<text x="406.5" y="479.1" font-size="6.05" fill="#666">0</text>
<text x="406.5" y="453.1" font-size="6.05" fill="#666">25</text>
<text x="406.5" y="427.1" font-size="6.05" fill="#666">50</text>
<text x="406.5" y="401.1" font-size="6.05" fill="#666">75</text>
<text x="406.5" y="375.1" font-size="6.05" fill="#666">100</text>
<text x="406.5" y="349.1" font-size="6.05" fill="#666">125</text>
<text transform="translate(51.5,412.0) rotate(-90)" font-size="6.25" fill="#666" text-anchor="middle">Sentiment %</text>
<text transform="translate(422.0,412.0) rotate(90)" font-size="6.15" fill="#666" text-anchor="middle">Documents</text>
<circle cx="71.0" cy="501" r="2.9" fill="#4db843"/>
<text x="78.5" y="503.1" font-size="6.1" font-weight="700" fill="#333">very positive</text>
<circle cx="129.0" cy="501" r="2.9" fill="#c6f5c1"/>
<text x="136.5" y="503.1" font-size="6.1" font-weight="700" fill="#333">somewhat positive</text>
<circle cx="205.0" cy="501" r="2.9" fill="#d0d0d0"/>
<text x="212.5" y="503.1" font-size="6.1" font-weight="700" fill="#333">neutral</text>
<circle cx="247.0" cy="501" r="2.9" fill="#f59d9d"/>
<text x="254.5" y="503.1" font-size="6.1" font-weight="700" fill="#333">somewhat negative</text>
<circle cx="326.0" cy="501" r="2.9" fill="#db4f55"/>
<text x="333.5" y="503.1" font-size="6.1" font-weight="700" fill="#333">very negative</text>
<rect x="381.0" y="500.45" width="9" height="1.1" fill="#111"/><circle cx="385.5" cy="501" r="2" fill="#111"/>
<text x="394.0" y="503.1" font-size="6.1" font-weight="700" fill="#333">total</text>
<rect x="494.70" y="347.00" width="311.50" height="130.00" fill="#7dcb74"/>
<polygon points="494.70,440.00 516.95,445.50 539.20,437.50 561.45,442.00 583.70,446.40 605.95,445.10 628.20,445.10 650.45,444.70 672.70,441.50 694.95,411.00 717.20,410.60 739.45,417.30 761.70,416.00 783.95,410.00 806.20,410.80 806.20,477.00 494.70,477.00" fill="#c6f5c1"/>
<polygon points="494.70,442.50 516.95,447.10 539.20,439.50 561.45,443.70 583.70,448.00 605.95,446.70 628.20,446.70 650.45,446.30 672.70,443.30 694.95,412.60 717.20,412.30 739.45,419.10 761.70,417.80 783.95,411.90 806.20,412.70 806.20,477.00 494.70,477.00" fill="#d9d9d9"/>
<polygon points="494.70,447.60 516.95,451.80 539.20,446.30 561.45,449.30 583.70,453.50 605.95,451.00 628.20,451.40 650.45,452.30 672.70,452.10 694.95,427.50 717.20,424.60 739.45,428.80 761.70,427.00 783.95,422.30 806.20,422.00 806.20,477.00 494.70,477.00" fill="#f7b3b3"/>
<polygon points="494.70,449.20 516.95,453.40 539.20,447.90 561.45,450.90 583.70,455.10 605.95,452.60 628.20,453.00 650.45,453.90 672.70,453.90 694.95,429.20 717.20,426.30 739.45,430.50 761.70,429.30 783.95,425.50 806.20,425.00 806.20,477.00 494.70,477.00" fill="#e57f82"/>
<polyline points="494.70,440.00 516.95,445.50 539.20,437.50 561.45,442.00 583.70,446.40 605.95,445.10 628.20,445.10 650.45,444.70 672.70,441.50 694.95,411.00 717.20,410.60 739.45,417.30 761.70,416.00 783.95,410.00 806.20,410.80" fill="none" stroke="#b4efae" stroke-width=".8"/>
<circle cx="494.7" cy="440.0" r="1.3" fill="#b4efae"/>
<circle cx="517.0" cy="445.5" r="1.3" fill="#b4efae"/>
<circle cx="539.2" cy="437.5" r="1.3" fill="#b4efae"/>
<circle cx="561.5" cy="442.0" r="1.3" fill="#b4efae"/>
<circle cx="583.7" cy="446.4" r="1.3" fill="#b4efae"/>
<circle cx="606.0" cy="445.1" r="1.3" fill="#b4efae"/>
<circle cx="628.2" cy="445.1" r="1.3" fill="#b4efae"/>
<circle cx="650.5" cy="444.7" r="1.3" fill="#b4efae"/>
<circle cx="672.7" cy="441.5" r="1.3" fill="#b4efae"/>
<circle cx="695.0" cy="411.0" r="1.3" fill="#b4efae"/>
<circle cx="717.2" cy="410.6" r="1.3" fill="#b4efae"/>
<circle cx="739.5" cy="417.3" r="1.3" fill="#b4efae"/>
<circle cx="761.7" cy="416.0" r="1.3" fill="#b4efae"/>
<circle cx="784.0" cy="410.0" r="1.3" fill="#b4efae"/>
<circle cx="806.2" cy="410.8" r="1.3" fill="#b4efae"/>
<polyline points="494.70,442.50 516.95,447.10 539.20,439.50 561.45,443.70 583.70,448.00 605.95,446.70 628.20,446.70 650.45,446.30 672.70,443.30 694.95,412.60 717.20,412.30 739.45,419.10 761.70,417.80 783.95,411.90 806.20,412.70" fill="none" stroke="#d0d0d0" stroke-width=".8"/>
<circle cx="494.7" cy="442.5" r="1.3" fill="#d0d0d0"/>
<circle cx="517.0" cy="447.1" r="1.3" fill="#d0d0d0"/>
<circle cx="539.2" cy="439.5" r="1.3" fill="#d0d0d0"/>
<circle cx="561.5" cy="443.7" r="1.3" fill="#d0d0d0"/>
<circle cx="583.7" cy="448.0" r="1.3" fill="#d0d0d0"/>
<circle cx="606.0" cy="446.7" r="1.3" fill="#d0d0d0"/>
<circle cx="628.2" cy="446.7" r="1.3" fill="#d0d0d0"/>
<circle cx="650.5" cy="446.3" r="1.3" fill="#d0d0d0"/>
<circle cx="672.7" cy="443.3" r="1.3" fill="#d0d0d0"/>
<circle cx="695.0" cy="412.6" r="1.3" fill="#d0d0d0"/>
<circle cx="717.2" cy="412.3" r="1.3" fill="#d0d0d0"/>
<circle cx="739.5" cy="419.1" r="1.3" fill="#d0d0d0"/>
<circle cx="761.7" cy="417.8" r="1.3" fill="#d0d0d0"/>
<circle cx="784.0" cy="411.9" r="1.3" fill="#d0d0d0"/>
<circle cx="806.2" cy="412.7" r="1.3" fill="#d0d0d0"/>
<polyline points="494.70,447.60 516.95,451.80 539.20,446.30 561.45,449.30 583.70,453.50 605.95,451.00 628.20,451.40 650.45,452.30 672.70,452.10 694.95,427.50 717.20,424.60 739.45,428.80 761.70,427.00 783.95,422.30 806.20,422.00" fill="none" stroke="#f59d9d" stroke-width=".8"/>
<circle cx="494.7" cy="447.6" r="1.3" fill="#f59d9d"/>
<circle cx="517.0" cy="451.8" r="1.3" fill="#f59d9d"/>
<circle cx="539.2" cy="446.3" r="1.3" fill="#f59d9d"/>
<circle cx="561.5" cy="449.3" r="1.3" fill="#f59d9d"/>
<circle cx="583.7" cy="453.5" r="1.3" fill="#f59d9d"/>
<circle cx="606.0" cy="451.0" r="1.3" fill="#f59d9d"/>
<circle cx="628.2" cy="451.4" r="1.3" fill="#f59d9d"/>
<circle cx="650.5" cy="452.3" r="1.3" fill="#f59d9d"/>
<circle cx="672.7" cy="452.1" r="1.3" fill="#f59d9d"/>
<circle cx="695.0" cy="427.5" r="1.3" fill="#f59d9d"/>
<circle cx="717.2" cy="424.6" r="1.3" fill="#f59d9d"/>
<circle cx="739.5" cy="428.8" r="1.3" fill="#f59d9d"/>
<circle cx="761.7" cy="427.0" r="1.3" fill="#f59d9d"/>
<circle cx="784.0" cy="422.3" r="1.3" fill="#f59d9d"/>
<circle cx="806.2" cy="422.0" r="1.3" fill="#f59d9d"/>
<polyline points="494.70,449.20 516.95,453.40 539.20,447.90 561.45,450.90 583.70,455.10 605.95,452.60 628.20,453.00 650.45,453.90 672.70,453.90 694.95,429.20 717.20,426.30 739.45,430.50 761.70,429.30 783.95,425.50 806.20,425.00" fill="none" stroke="#dc5055" stroke-width=".8"/>
<circle cx="494.7" cy="449.2" r="1.3" fill="#dc5055"/>
<circle cx="517.0" cy="453.4" r="1.3" fill="#dc5055"/>
<circle cx="539.2" cy="447.9" r="1.3" fill="#dc5055"/>
<circle cx="561.5" cy="450.9" r="1.3" fill="#dc5055"/>
<circle cx="583.7" cy="455.1" r="1.3" fill="#dc5055"/>
<circle cx="606.0" cy="452.6" r="1.3" fill="#dc5055"/>
<circle cx="628.2" cy="453.0" r="1.3" fill="#dc5055"/>
<circle cx="650.5" cy="453.9" r="1.3" fill="#dc5055"/>
<circle cx="672.7" cy="453.9" r="1.3" fill="#dc5055"/>
<circle cx="695.0" cy="429.2" r="1.3" fill="#dc5055"/>
<circle cx="717.2" cy="426.3" r="1.3" fill="#dc5055"/>
<circle cx="739.5" cy="430.5" r="1.3" fill="#dc5055"/>
<circle cx="761.7" cy="429.3" r="1.3" fill="#dc5055"/>
<circle cx="784.0" cy="425.5" r="1.3" fill="#dc5055"/>
<circle cx="806.2" cy="425.0" r="1.3" fill="#dc5055"/>
<polyline points="494.70,347.00 516.95,347.00 539.20,347.00 561.45,347.00 583.70,347.00 605.95,347.00 628.20,347.00 650.45,347.00 672.70,347.00 694.95,347.00 717.20,347.00 739.45,347.00 761.70,347.00 783.95,347.00 806.20,347.00" fill="none" stroke="#62c15a" stroke-width=".9"/>
<circle cx="494.7" cy="347.0" r="1.95" fill="#58ba50"/>
<circle cx="517.0" cy="347.0" r="1.95" fill="#58ba50"/>
<circle cx="539.2" cy="347.0" r="1.95" fill="#58ba50"/>
<circle cx="561.5" cy="347.0" r="1.95" fill="#58ba50"/>
<circle cx="583.7" cy="347.0" r="1.95" fill="#58ba50"/>
<circle cx="606.0" cy="347.0" r="1.95" fill="#58ba50"/>
<circle cx="628.2" cy="347.0" r="1.95" fill="#58ba50"/>
<circle cx="650.5" cy="347.0" r="1.95" fill="#58ba50"/>
<circle cx="672.7" cy="347.0" r="1.95" fill="#58ba50"/>
<circle cx="695.0" cy="347.0" r="1.95" fill="#58ba50"/>
<circle cx="717.2" cy="347.0" r="1.95" fill="#58ba50"/>
<circle cx="739.5" cy="347.0" r="1.95" fill="#58ba50"/>
<circle cx="761.7" cy="347.0" r="1.95" fill="#58ba50"/>
<circle cx="784.0" cy="347.0" r="1.95" fill="#58ba50"/>
<circle cx="806.2" cy="347.0" r="1.95" fill="#58ba50"/>
<rect x="494.7" y="477.0" width="311.5" height=".7" fill="#d8d8d8"/>
<polyline points="494.70,422.80 516.95,382.10 539.20,378.70 561.45,397.00 583.70,373.20 605.95,369.00 628.20,372.40 650.45,388.50 672.70,430.80 694.95,469.00 717.20,449.20 739.45,430.50 761.70,424.20 783.95,400.90 806.20,389.40" fill="none" stroke="#111" stroke-width="1.15" stroke-linejoin="round"/>
<circle cx="494.7" cy="422.8" r="2.1" fill="#111"/>
<circle cx="517.0" cy="382.1" r="2.1" fill="#111"/>
<circle cx="539.2" cy="378.7" r="2.1" fill="#111"/>
<circle cx="561.5" cy="397.0" r="2.1" fill="#111"/>
<circle cx="583.7" cy="373.2" r="2.1" fill="#111"/>
<circle cx="606.0" cy="369.0" r="2.1" fill="#111"/>
<circle cx="628.2" cy="372.4" r="2.1" fill="#111"/>
<circle cx="650.5" cy="388.5" r="2.1" fill="#111"/>
<circle cx="672.7" cy="430.8" r="2.1" fill="#111"/>
<circle cx="695.0" cy="469.0" r="2.1" fill="#111"/>
<circle cx="717.2" cy="449.2" r="2.1" fill="#111"/>
<circle cx="739.5" cy="430.5" r="2.1" fill="#111"/>
<circle cx="761.7" cy="424.2" r="2.1" fill="#111"/>
<circle cx="784.0" cy="400.9" r="2.1" fill="#111"/>
<circle cx="806.2" cy="389.4" r="2.1" fill="#111"/>
<rect x="494.4" y="477.6" width=".6" height="2.6" fill="#dcdcdc"/>
<text x="494.7" y="487.2" font-size="5.9" fill="#666" text-anchor="middle">Q4'17</text>
<rect x="538.9" y="477.6" width=".6" height="2.6" fill="#dcdcdc"/>
<text x="539.2" y="487.2" font-size="5.9" fill="#666" text-anchor="middle">Q3'18</text>
<rect x="583.4" y="477.6" width=".6" height="2.6" fill="#dcdcdc"/>
<text x="583.7" y="487.2" font-size="5.9" fill="#666" text-anchor="middle">Q4'18</text>
<rect x="627.9" y="477.6" width=".6" height="2.6" fill="#dcdcdc"/>
<text x="628.2" y="487.2" font-size="5.9" fill="#666" text-anchor="middle">Q3'19</text>
<rect x="672.4" y="477.6" width=".6" height="2.6" fill="#dcdcdc"/>
<text x="672.7" y="487.2" font-size="5.9" fill="#666" text-anchor="middle">Q4'19</text>
<rect x="716.9" y="477.6" width=".6" height="2.6" fill="#dcdcdc"/>
<text x="717.2" y="487.2" font-size="5.9" fill="#666" text-anchor="middle">Q3'20</text>
<rect x="761.4" y="477.6" width=".6" height="2.6" fill="#dcdcdc"/>
<text x="761.7" y="487.2" font-size="5.9" fill="#666" text-anchor="middle">Q4'20</text>
<rect x="805.9" y="477.6" width=".6" height="2.6" fill="#dcdcdc"/>
<text x="806.2" y="487.2" font-size="5.9" fill="#666" text-anchor="middle">Q3'21</text>
<text x="484.0" y="479.1" font-size="6.05" fill="#666" text-anchor="end">0</text>
<text x="484.0" y="446.6" font-size="6.05" fill="#666" text-anchor="end">25</text>
<text x="484.0" y="414.1" font-size="6.05" fill="#666" text-anchor="end">50</text>
<text x="484.0" y="381.6" font-size="6.05" fill="#666" text-anchor="end">75</text>
<text x="484.0" y="349.1" font-size="6.05" fill="#666" text-anchor="end">100</text>
<text x="817.5" y="479.1" font-size="6.05" fill="#666">0</text>
<text x="817.5" y="457.4" font-size="6.05" fill="#666">250</text>
<text x="817.5" y="435.8" font-size="6.05" fill="#666">500</text>
<text x="817.5" y="414.1" font-size="6.05" fill="#666">750</text>
<text x="817.5" y="392.4" font-size="6.05" fill="#666">1000</text>
<text x="817.5" y="370.8" font-size="6.05" fill="#666">1250</text>
<text x="817.5" y="349.1" font-size="6.05" fill="#666">1500</text>
<text transform="translate(467.5,412.0) rotate(-90)" font-size="6.25" fill="#666" text-anchor="middle">Sentiment %</text>
<text transform="translate(835.5,412.0) rotate(90)" font-size="6.15" fill="#666" text-anchor="middle">Documents</text>
<circle cx="486.0" cy="501" r="2.9" fill="#4db843"/>
<text x="493.5" y="503.1" font-size="6.1" font-weight="700" fill="#333">very positive</text>
<circle cx="544.0" cy="501" r="2.9" fill="#c6f5c1"/>
<text x="551.5" y="503.1" font-size="6.1" font-weight="700" fill="#333">somewhat positive</text>
<circle cx="621.0" cy="501" r="2.9" fill="#d0d0d0"/>
<text x="628.5" y="503.1" font-size="6.1" font-weight="700" fill="#333">neutral</text>
<circle cx="662.0" cy="501" r="2.9" fill="#f59d9d"/>
<text x="669.5" y="503.1" font-size="6.1" font-weight="700" fill="#333">somewhat negative</text>
<circle cx="741.0" cy="501" r="2.9" fill="#db4f55"/>
<text x="748.5" y="503.1" font-size="6.1" font-weight="700" fill="#333">very negative</text>
<rect x="796.0" y="500.45" width="9" height="1.1" fill="#111"/><circle cx="800.5" cy="501" r="2" fill="#111"/>
<text x="809.0" y="503.1" font-size="6.1" font-weight="700" fill="#333">total</text>
<path d="M45.3,590 V583 L42.4,578.2 M45.3,583 L51,574.6" stroke="#666" stroke-width=".8" fill="none"/>
<circle cx="42.3" cy="578.2" r="1.7" fill="#e0524f"/><circle cx="51.2" cy="574.5" r="1.7" fill="#3aa64a"/>
<rect x="357.6" y="568" width="5.4" height="30" rx="2.7" fill="#c6c6c6"/>
</svg>
</div></body></html>
